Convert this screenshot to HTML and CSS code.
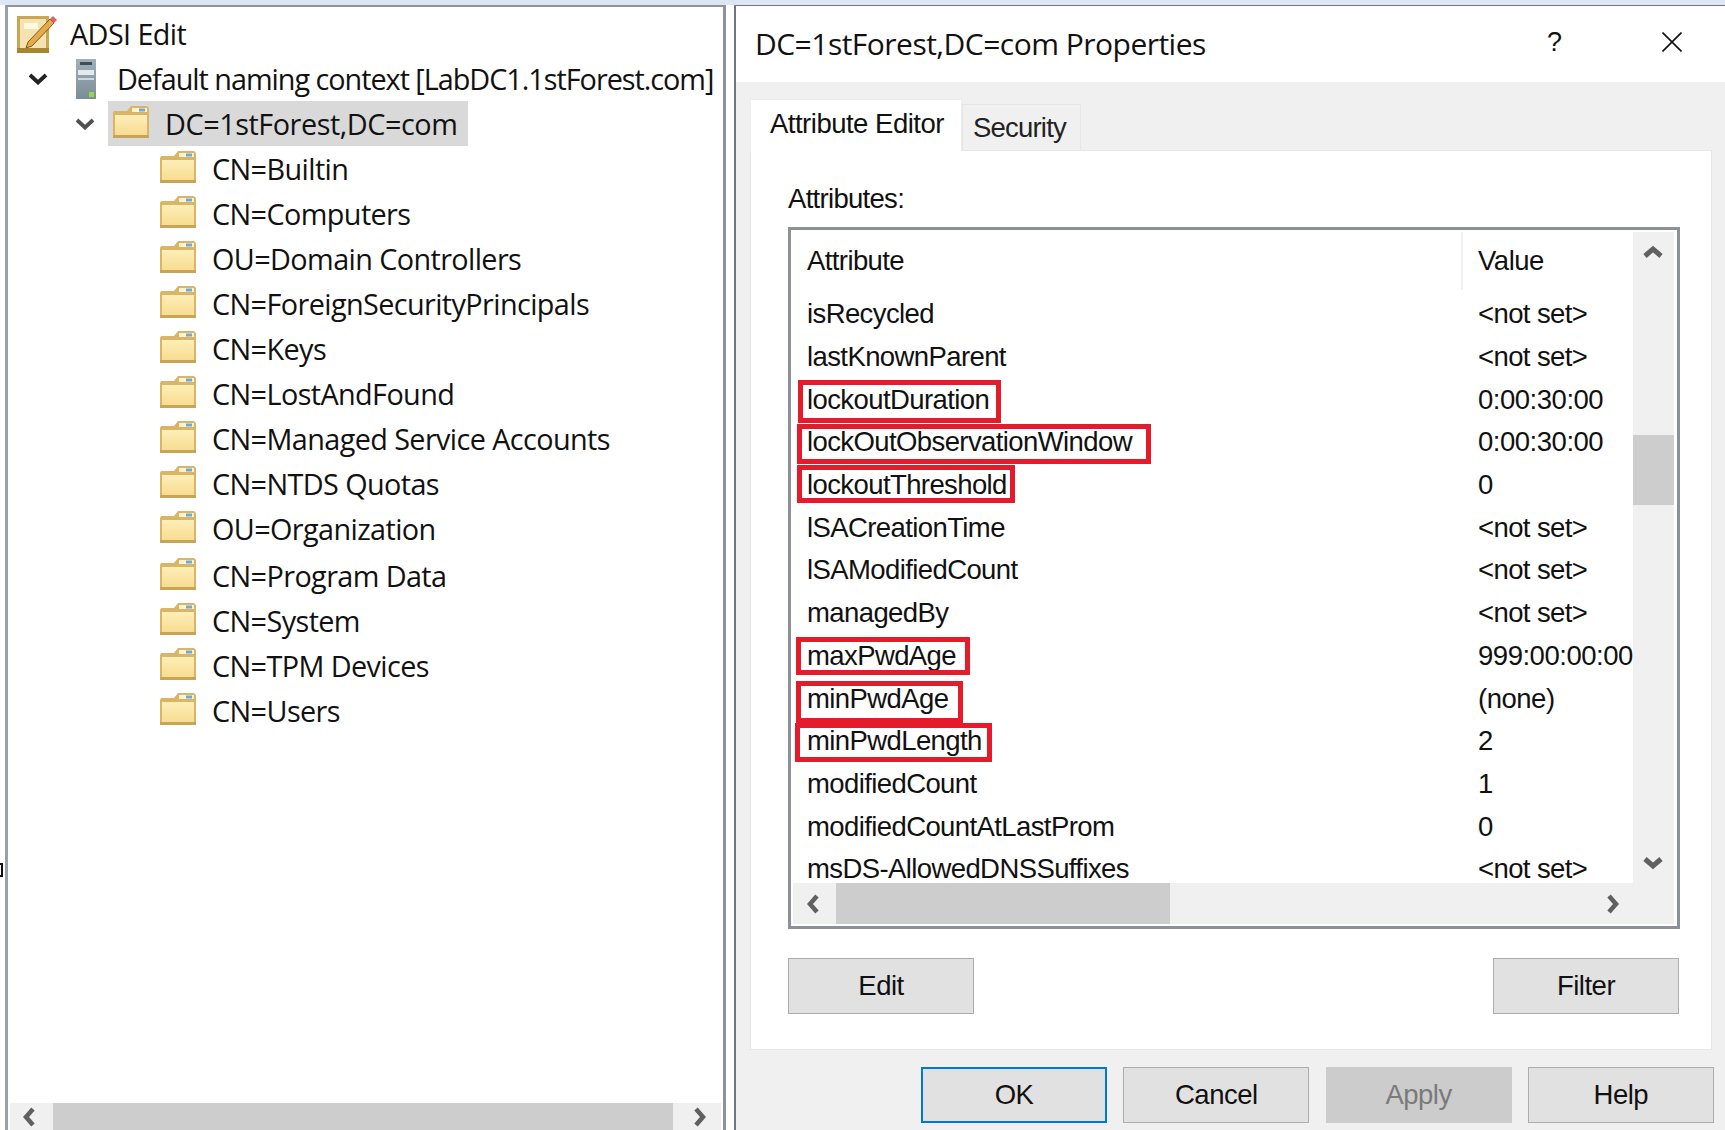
FILE: index.html
```html
<!DOCTYPE html>
<html lang="en">
<head>
<meta charset="utf-8">
<title>ADSI Edit</title>
<link rel="stylesheet" href="styles.css">
</head>
<body>
<svg class="defs" width="0" height="0" aria-hidden="true">
  <defs>
    <linearGradient id="fbody" x1="0" x2="0" y1="0" y2="1"><stop offset="0" stop-color="#fdeeb8"/><stop offset="1" stop-color="#f8dc90"/></linearGradient>
    <symbol id="folder" viewBox="0 0 36 34">
      <path d="M0 9 L1 7 H14 L18 2 H34 L36 4 V32 L35 34 H1 L0 32Z" fill="#d9b565"/>
      <path d="M2 11 H34 V31 H2Z" fill="url(#fbody)"/>
      <path d="M19 4 H34 V8 H19Z" fill="#fdf3d0"/>
      <path d="M26 4.500 H32 V7.500 H26Z" fill="#6fa9da"/>
      <path d="M0 31 H36 V34 H0Z" fill="#c7a458"/>
    </symbol>
    <symbol id="chev-down" viewBox="0 0 20 12"><path d="M2 2 L10 9.500 L18 2" fill="none" stroke="currentColor" stroke-width="3.800"/></symbol>
  </defs>
</svg>
<div class="taskstrip"></div>
<i class="edge-mark"></i>
<main class="desktop">
  <section class="tree-pane">
    <div class="tree">
      <div class="node root">
        <svg class="app-icon" viewBox="0 0 40 38" aria-hidden="true">
          <path d="M0 1 H32 V38 H0Z" fill="#c9a655"/>
          <path d="M3 4 H29 V33 H3Z" fill="#f3e3b0"/>
          <path d="M7 8 H21 V14 H7Z" fill="#fff8e0"/>
          <path d="M0 33 H32 V38 H0Z" fill="#a8862f"/>
          <path d="M9 33 L11 27 L33 4 L37 8 L15 31Z" fill="#e8a94a" stroke="#7b5b22" stroke-width="1"/>
          <path d="M33 4 L36 1 L40 5 L37 8Z" fill="#d9636a"/>
        </svg>
        <span>ADSI Edit</span>
      </div>
      <div class="node server">
        <svg class="chev dark"><use href="#chev-down"/></svg>
        <svg class="server-icon" viewBox="0 0 20 40" aria-hidden="true">
          <defs><linearGradient id="srv" x1="0" x2="0" y1="0" y2="1"><stop offset="0" stop-color="#9fb0bb"/><stop offset="1" stop-color="#7d8d97"/></linearGradient></defs>
          <path d="M0 0 H20 V40 H0Z" fill="url(#srv)"/>
          <path d="M4 3 H16 V6 H4Z" fill="#3f4d57"/>
          <path d="M2 11 H18 V16 H2Z" fill="#e3e9ed"/>
          <path d="M2 19 H18 V21 H2Z" fill="#cfd7dc"/>
          <path d="M13 33 H18 V38 H13Z" fill="#8fdc3c"/>
        </svg>
        <span class="server-name">Default naming context [LabDC1.1stForest.com]</span>
      </div>
      <div class="node domain">
        <svg class="chev mid"><use href="#chev-down"/></svg>
        <div class="selected">
          <svg class="folder"><use href="#folder"/></svg>
          <span class="domain-name">DC=1stForest,DC=com</span>
        </div>
      </div>
      <div class="node leaf"><svg class="folder"><use href="#folder"/></svg><span>CN=Builtin</span></div>
      <div class="node leaf"><svg class="folder"><use href="#folder"/></svg><span>CN=Computers</span></div>
      <div class="node leaf"><svg class="folder"><use href="#folder"/></svg><span>OU=Domain Controllers</span></div>
      <div class="node leaf"><svg class="folder"><use href="#folder"/></svg><span>CN=ForeignSecurityPrincipals</span></div>
      <div class="node leaf"><svg class="folder"><use href="#folder"/></svg><span>CN=Keys</span></div>
      <div class="node leaf"><svg class="folder"><use href="#folder"/></svg><span>CN=LostAndFound</span></div>
      <div class="node leaf"><svg class="folder"><use href="#folder"/></svg><span>CN=Managed Service Accounts</span></div>
      <div class="node leaf"><svg class="folder"><use href="#folder"/></svg><span>CN=NTDS Quotas</span></div>
      <div class="node leaf"><svg class="folder"><use href="#folder"/></svg><span>OU=Organization</span></div>
      <div class="node leaf after-gap"><svg class="folder"><use href="#folder"/></svg><span>CN=Program Data</span></div>
      <div class="node leaf"><svg class="folder"><use href="#folder"/></svg><span>CN=System</span></div>
      <div class="node leaf"><svg class="folder"><use href="#folder"/></svg><span>CN=TPM Devices</span></div>
      <div class="node leaf"><svg class="folder"><use href="#folder"/></svg><span>CN=Users</span></div>
    </div>
    <div class="hscroll tree-scroll">
      <svg class="arrow" viewBox="0 0 14 20"><path d="M11 2 L4 10 L11 18" fill="none" stroke="#606060" stroke-width="4.500"/></svg>
      <div class="track"><div class="thumb"></div></div>
      <svg class="arrow" viewBox="0 0 14 20"><path d="M3 2 L10 10 L3 18" fill="none" stroke="#606060" stroke-width="4.500"/></svg>
    </div>
  </section>

  <section class="dialog">
    <header class="titlebar">
      <h1>DC=1stForest,DC=com Properties</h1>
      <span class="help-mark">?</span>
      <svg class="close" viewBox="0 0 20 20" aria-hidden="true"><path d="M0.500 0.500 L19.500 19.500 M19.500 0.500 L0.500 19.500" stroke="#111" stroke-width="1.600"/></svg>
    </header>
    <div class="dialog-body">
      <div class="tabs">
        <div class="tab active">Attribute Editor</div>
        <div class="tab">Security</div>
      </div>
      <div class="panel">
        <div class="label">Attributes:</div>
        <div class="listbox">
          <div class="list-top">
            <div class="table">
              <div class="row head"><span class="name">Attribute</span><span class="value">Value</span></div>
              <div class="rows">
                <div class="row"><span class="name">isRecycled</span><span class="value unset">&lt;not set&gt;</span></div>
                <div class="row"><span class="name">lastKnownParent</span><span class="value unset">&lt;not set&gt;</span></div>
                <div class="row"><span class="name"><span class="mark m-dur">lockoutDuration</span></span><span class="value">0:00:30:00</span></div>
                <div class="row"><span class="name"><span class="mark m-obs">lockOutObservationWindow</span></span><span class="value">0:00:30:00</span></div>
                <div class="row"><span class="name"><span class="mark m-thr">lockoutThreshold</span></span><span class="value">0</span></div>
                <div class="row"><span class="name">lSACreationTime</span><span class="value unset">&lt;not set&gt;</span></div>
                <div class="row"><span class="name">lSAModifiedCount</span><span class="value unset">&lt;not set&gt;</span></div>
                <div class="row"><span class="name">managedBy</span><span class="value unset">&lt;not set&gt;</span></div>
                <div class="row"><span class="name"><span class="mark m-max">maxPwdAge</span></span><span class="value">999:00:00:00</span></div>
                <div class="row"><span class="name"><span class="mark m-min">minPwdAge</span></span><span class="value">(none)</span></div>
                <div class="row"><span class="name"><span class="mark m-len">minPwdLength</span></span><span class="value">2</span></div>
                <div class="row"><span class="name">modifiedCount</span><span class="value">1</span></div>
                <div class="row"><span class="name">modifiedCountAtLastProm</span><span class="value">0</span></div>
                <div class="row"><span class="name">msDS-AllowedDNSSuffixes</span><span class="value unset">&lt;not set&gt;</span></div>
              </div>
            </div>
            <div class="vscroll">
              <svg class="arrow-v" viewBox="0 0 20 14"><path d="M2 11 L10 4 L18 11" fill="none" stroke="#606060" stroke-width="5"/></svg>
              <div class="vthumb"></div>
              <svg class="arrow-v" viewBox="0 0 20 14"><path d="M2 3 L10 10 L18 3" fill="none" stroke="#606060" stroke-width="5"/></svg>
            </div>
          </div>
          <div class="hscroll list-scroll">
            <svg class="arrow" viewBox="0 0 14 20"><path d="M11 2 L4 10 L11 18" fill="none" stroke="#606060" stroke-width="4.500"/></svg>
            <div class="track"><div class="thumb"></div></div>
            <svg class="arrow" viewBox="0 0 14 20"><path d="M3 2 L10 10 L3 18" fill="none" stroke="#606060" stroke-width="4.500"/></svg>
          </div>
        </div>
        <div class="panel-actions">
          <button class="btn">Edit</button>
          <button class="btn">Filter</button>
        </div>
      </div>
      <footer class="footer">
        <button class="btn primary">OK</button>
        <button class="btn">Cancel</button>
        <button class="btn disabled">Apply</button>
        <button class="btn">Help</button>
      </footer>
    </div>
  </section>
</main>
</body>
</html>
```

FILE: styles.css
```css
* { box-sizing: border-box; }
html, body { margin: 0; height: 100%; overflow: hidden; background: #fff; }
body {
  width: 1725px;
  height: 1130px;
  font-family: "Open Sans", "Noto Sans", sans-serif;
  color: #111;
  display: flex;
  flex-direction: column;
}
.defs { position: absolute; }
.taskstrip { height: 5px; background: #dce7f3; flex: none; }
.edge-mark {
  position: absolute; left: 0; top: 863px; width: 3px; height: 14px;
  border: 2px solid #111; border-left: 0;
}
.desktop { flex: 1; display: flex; min-height: 0; padding-left: 5px; }

/* tree pane */
.tree-pane {
  width: 721px;
  flex: none;
  display: flex;
  flex-direction: column;
  background: #fff;
  border: 3px solid #8d939c;
  border-bottom: 0;
  border-top-width: 2px;
  border-left-color: #9aa0a8;
}
.tree { flex: 1; padding-top: 4px; font-size: 28.800px; letter-spacing: -0.600px; }
.node { height: 45px; display: flex; align-items: center; white-space: nowrap; }
.node.after-gap { margin-top: 2px; }
.node.root { padding-left: 9px; gap: 13px; }
.app-icon { width: 40px; height: 38px; flex: none; }
.node.server { padding-left: 20px; }
.node.server .chev { margin-right: 28px; }
.server-icon { width: 20px; height: 40px; flex: none; margin-right: 21px; }
.server-name { letter-spacing: -1.020px; }
.domain-name { letter-spacing: -0.440px; }
.chev { width: 20px; height: 12px; flex: none; }
.chev.dark { color: #222; }
.chev.mid { color: #505050; }
.node.domain { padding-left: 67px; }
.selected {
  margin-left: 13px;
  width: 360px;
  height: 45px;
  background: #d9d9d9;
  display: flex;
  align-items: center;
  padding-left: 5px;
  gap: 16px;
}
.folder { width: 36px; height: 34px; flex: none; position: relative; top: -3px; }
.node.leaf { padding-left: 152px; gap: 16px; }
.tree-scroll { height: 27px; margin: 0 2px; flex: none; }

/* scrollbars */
.hscroll { display: flex; align-items: center; background: #f0f0f0; }
.arrow { width: 14px; height: 20px; flex: none; margin: 0 14px; }
.track { flex: 1; height: 100%; overflow: hidden; }
.thumb { height: 100%; background: #cdcdcd; }
.tree-scroll .arrow { margin: 0 14px 0 8px; }
.tree-scroll .arrow:first-child { margin: 0 17px 0 12px; }
.tree-scroll .thumb { width: 620px; }

/* dialog */
.dialog {
  margin-left: 8px;
  flex: 1;
  background: #f0f0f0;
  border-left: 2px solid #6f7680;
  border-top: 1px solid #6f7680;
  display: flex;
  flex-direction: column;
  min-width: 0;
}
.titlebar {
  height: 76px;
  flex: none;
  background: #fff;
  display: flex;
  align-items: center;
  padding-left: 19px;
}
.titlebar h1 { margin: 0; font-weight: 400; font-size: 30px; letter-spacing: -0.520px; flex: 1; position: relative; top: -1px; }
.help-mark { font-family: "Liberation Sans", sans-serif; font-size: 27px; margin-right: 100px; position: relative; top: -2px; }
.close { width: 20px; height: 20px; margin-right: 43px; position: relative; top: -2px; flex: none; }
.dialog-body { flex: 1; display: flex; flex-direction: column; padding-left: 14px; min-height: 0; font-family: "Liberation Sans", Arial, sans-serif; font-size: 27.500px; letter-spacing: -0.500px; }
.tabs { display: flex; align-items: flex-end; height: 68px; padding-top: 17px; flex: none; }
.tab {
  height: 46px;
  width: 119px;
  padding: 7px 0 0 10px;
  background: #f0f0f0;
  border: 1px solid #e6e6e6;
  border-bottom: 0;
  color: #222;
  letter-spacing: -0.800px;
}
.tab.active {
  width: 212px;
  height: 52px;
  margin-bottom: -1px;
  position: relative;
  background: #fff;
  padding: 8px 0 0 19px;
  color: #111;
  border-color: #ececec;
  letter-spacing: -0.500px;
}
.panel {
  width: 962px;
  height: 900px;
  flex: none;
  background: #fff;
  border: 1px solid #e6e6e6;
  padding: 33px 31px 0 37px;
  display: flex;
  flex-direction: column;
}
.label { height: 43px; line-height: 30px; flex: none; letter-spacing: -0.700px; }
.listbox {
  height: 702px;
  flex: none;
  border: 3px solid #8c9198;
  padding: 2px 3px 2px 2px;
  display: flex;
  flex-direction: column;
  overflow: hidden;
}
.list-top { flex: 1; min-height: 0; display: flex; }
.table { flex: 1; min-width: 0; overflow: hidden; }
.row { display: flex; height: 42.700px; align-items: center; white-space: nowrap; }
.row.head { height: 61px; padding-bottom: 3px; }
.name { width: 670px; flex: none; padding-left: 14px; letter-spacing: -0.600px; }
.value { flex: none; padding-left: 15px; letter-spacing: -0.480px; }
.value.unset { letter-spacing: -0.600px; }
.head .name, .head .value { height: 100%; display: flex; align-items: center; }
.head .name { border-right: 2px solid #f0f0f0; }
.vscroll { width: 41px; flex: none; background: #f0f0f0; position: relative; }
.arrow-v { width: 20px; height: 14px; position: absolute; left: 10px; }
.arrow-v:first-child { top: 13px; }
.arrow-v:last-child { bottom: 13px; }
.vthumb { position: absolute; left: 0; right: 0; top: 203px; height: 70px; background: #cdcdcd; }
.list-scroll { height: 41px; flex: none; }
.list-scroll .arrow:first-child { margin: 0 16px 0 13px; }
.list-scroll .arrow:last-child { margin: 0 54px 0 0; }
.list-scroll .thumb { width: 334px; }

/* red annotation boxes over the text */
.mark { position: relative; display: inline-block; }
.mark::after {
  content: "";
  position: absolute;
  border: 5px solid #e31b2b;
}
.m-dur::after { top: -4px; bottom: -7px; left: -9px; right: -12px; }
.m-obs::after { top: -2px; bottom: -6px; left: -10px; right: -19px; }
.m-thr::after { top: -4px; bottom: -2px; left: -10px; right: -8px; }
.m-max::after { top: -3px; bottom: -3px; left: -11px; right: -14px; }
.m-min::after { top: -2px; bottom: -8px; left: -11px; right: -15px; }
.m-len::after { top: -2px; bottom: -5px; left: -12px; right: -10px; }

/* buttons */
.btn {
  width: 186px;
  height: 56px;
  background: #e1e1e1;
  border: 1px solid #adadad;
  font: inherit;
  color: #111;
  padding: 0;
  letter-spacing: -0.500px;
}
.btn.primary { border: 2px solid #0078d7; }
.btn.disabled { background: #cccccc; border-color: #cccccc; color: #7a7a7a; }
.panel-actions { display: flex; justify-content: space-between; margin-top: 29px; padding-right: 1px; }
.footer { display: flex; gap: 16.300px; padding: 17px 0 0 171px; flex: none; }
```
